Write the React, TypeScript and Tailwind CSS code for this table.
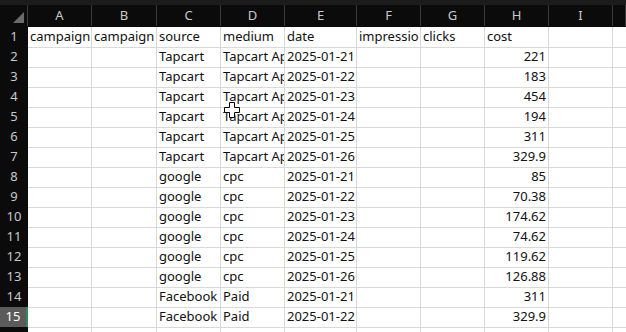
import React from "react";

const cols = ["A", "B", "C", "D", "E", "F", "G", "H", "I", ""];

type Row = [string, string, string, string, string, string, string, string];

const rows: Row[] = [
  ["campaign", "campaign", "source", "medium", "date", "impressio", "clicks", "cost"],
  ["", "", "Tapcart", "Tapcart App", "2025-01-21", "", "", "221"],
  ["", "", "Tapcart", "Tapcart App", "2025-01-22", "", "", "183"],
  ["", "", "Tapcart", "Tapcart App", "2025-01-23", "", "", "454"],
  ["", "", "Tapcart", "Tapcart App", "2025-01-24", "", "", "194"],
  ["", "", "Tapcart", "Tapcart App", "2025-01-25", "", "", "311"],
  ["", "", "Tapcart", "Tapcart App", "2025-01-26", "", "", "329.9"],
  ["", "", "google", "cpc", "2025-01-21", "", "", "85"],
  ["", "", "google", "cpc", "2025-01-22", "", "", "70.38"],
  ["", "", "google", "cpc", "2025-01-23", "", "", "174.62"],
  ["", "", "google", "cpc", "2025-01-24", "", "", "74.62"],
  ["", "", "google", "cpc", "2025-01-25", "", "", "119.62"],
  ["", "", "google", "cpc", "2025-01-26", "", "", "126.88"],
  ["", "", "Facebook", "Paid", "2025-01-21", "", "", "311"],
  ["", "", "Facebook", "Paid", "2025-01-22", "", "", "329.9"],
  ["", "", "", "", "", "", "", ""],
];

const grid = "grid grid-cols-[28px_64px_65px_64px_64px_72px_64px_64px_64px_64px_1fr]";

export default function App() {
  return (
    <div
      className="relative h-[332px] w-[626px] overflow-hidden bg-white text-[13px]"
      style={{ fontFamily: '"Noto Sans", sans-serif' }}
    >
      <div className="h-[5px] bg-[#1c1c1c]" />

      {/* column headers */}
      <div className={`${grid} h-[22px] bg-[#0b0b0b] text-[#c8c8c8]`}>
        <div className="relative border-r border-[#3c3c3c]">
          <div className="absolute bottom-[3px] right-[3px] h-0 w-0 border-b-[11px] border-l-[11px] border-b-[#6b6b6b] border-l-transparent" />
        </div>
        {cols.map((c, i) => (
          <div key={i} className="flex items-center justify-center border-r border-[#3c3c3c]">
            {c}
          </div>
        ))}
        <div />
      </div>

      {/* rows */}
      {rows.map((r, ri) => {
        const selected = ri === 14;
        return (
          <div key={ri} className={`${grid} h-[20px]`}>
            <div
              className={`flex items-center justify-center border-b ${
                selected
                  ? "border-r-2 border-b-[#3c3c3c] border-r-[#2e8b57] bg-[#5b5b5b] text-white"
                  : "border-b-[#2e2e2e] bg-[#0b0b0b] text-[#c8c8c8]"
              }`}
            >
              {ri + 1}
            </div>
            {r.map((v, ci) => (
              <div
                key={ci}
                className={`flex items-center overflow-hidden whitespace-nowrap border-b border-r border-[#d9d9d9] px-[2px] text-[#111] ${
                  ci === 7 && ri > 0 ? "justify-end" : ""
                }`}
              >
                {v}
              </div>
            ))}
            <div className="border-b border-r border-[#d9d9d9]" />
            <div className="border-b border-[#d9d9d9]" />
          </div>
        );
      })}

      {/* mouse cursor */}
      <svg className="absolute left-[224px] top-[102px]" width="16" height="16" viewBox="0 0 16 16">
        <path
          d="M5.5 0.5h5v5h5v5h-5v5h-5v-5h-5v-5h5z"
          fill="#fff"
          stroke="#000"
          strokeWidth="1"
        />
      </svg>
    </div>
  );
}
